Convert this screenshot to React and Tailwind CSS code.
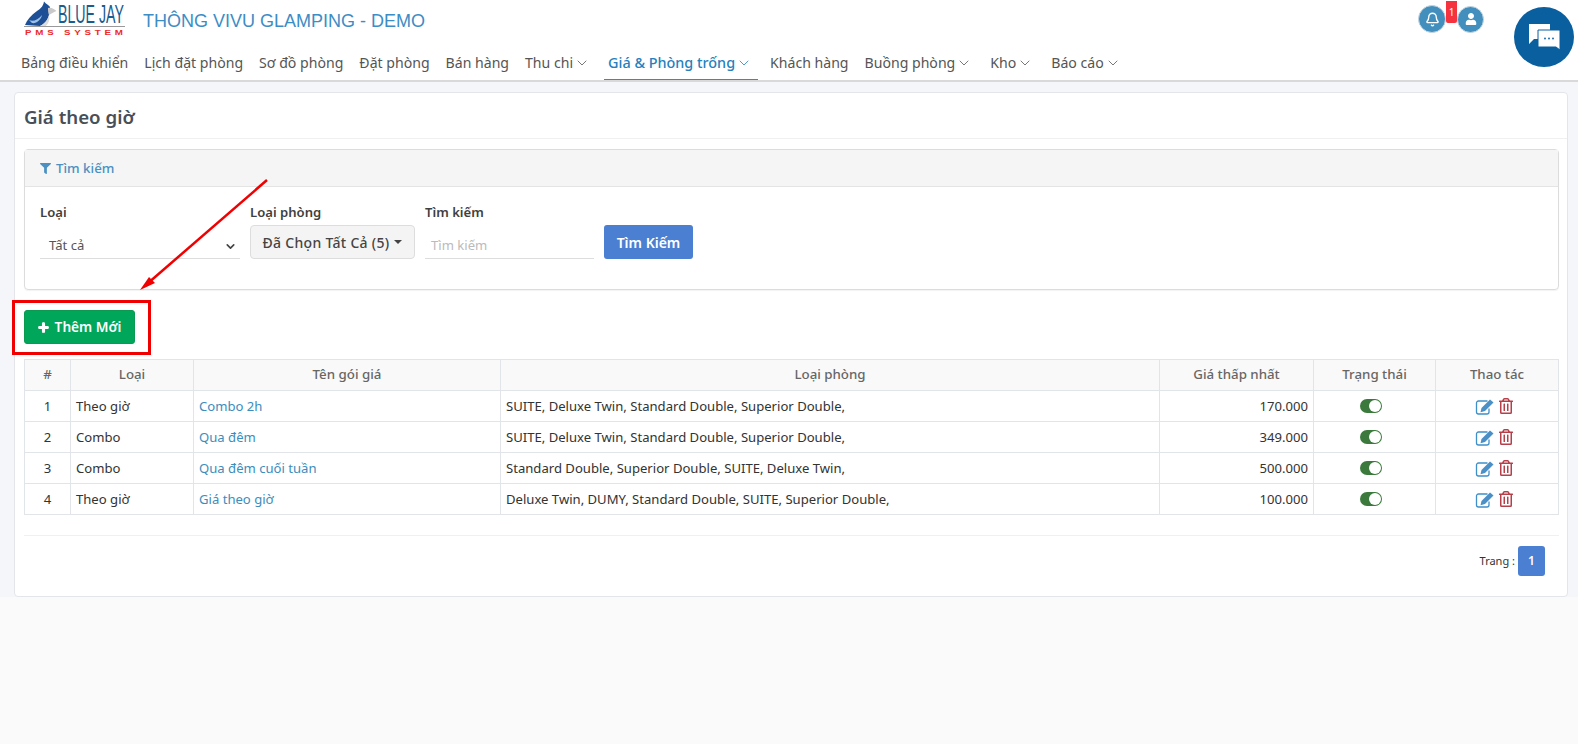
import React from 'react';
import { ChevronDown, Bell } from 'lucide-react';
import { FaFilter, FaPlus, FaUser, FaRegTrashAlt } from 'react-icons/fa';

const navItems = [
  { label: 'Bảng điều khiển' },
  { label: 'Lịch đặt phòng' },
  { label: 'Sơ đồ phòng' },
  { label: 'Đặt phòng' },
  { label: 'Bán hàng' },
  { label: 'Thu chi', caret: true },
  { label: 'Giá & Phòng trống', caret: true, active: true },
  { label: 'Khách hàng' },
  { label: 'Buồng phòng', caret: true },
  { label: 'Kho', caret: true },
  { label: 'Báo cáo', caret: true },
];

const rows = [
  { id: 1, type: 'Theo giờ', name: 'Combo 2h', rooms: 'SUITE, Deluxe Twin, Standard Double, Superior Double,', price: '170.000' },
  { id: 2, type: 'Combo', name: 'Qua đêm', rooms: 'SUITE, Deluxe Twin, Standard Double, Superior Double,', price: '349.000' },
  { id: 3, type: 'Combo', name: 'Qua đêm cuối tuần', rooms: 'Standard Double, Superior Double, SUITE, Deluxe Twin,', price: '500.000' },
  { id: 4, type: 'Theo giờ', name: 'Giá theo giờ', rooms: 'Deluxe Twin, DUMY, Standard Double, SUITE, Superior Double,', price: '100.000' },
];

const Logo = () => (
  <svg width="102" height="37" viewBox="0 0 102 37" className="shrink-0">
    <path d="M1 25 C3 20 7 15 13 11 C16 9 19 7 20 1.5 C22 4 25 5 26 7 L25 15 C24 20 20 24 16 26 Z" fill="#1d4f96" />
    <path d="M5 20 C9 22 14 20 18 15 C17 20 12 24 8 23 Z" fill="#9dc0e6" />
    <path d="M24 8 C27 7 30 9 32.5 11 C30 12 28 13 25 15 C24 13 24 10 24 8 Z" fill="#c9c9c9" />
    <path d="M16 26 C20 24 24 20 25 15 C26 19 25 23 22 26 Z" fill="#dddddd" />
    <text x="34" y="23" textLength="66" lengthAdjust="spacingAndGlyphs" fontFamily="Liberation Sans" fontSize="25" fill="#1a5c8e">BLUE JAY</text>
    <rect x="0" y="26" width="101" height="1" fill="#999" />
    <text transform="scale(1.4 1)" x="0.7" y="35" textLength="70" lengthAdjust="spacing" fontFamily="Liberation Sans" fontSize="7" fontWeight="700" fill="#ee2a2a">PMS SYSTEM</text>
  </svg>
);

const ChatIcon = () => (
  <svg width="33" height="28" viewBox="0 0 33 28">
    <path d="M1 1 H22 V16 H6 L1 21 Z" fill="#fff" />
    <path d="M10 7 H32 V27 L28 24 H10 Z" fill="#fff" stroke="#0a5f9e" strokeWidth="1" />
    <circle cx="17" cy="15.5" r="0.9" fill="#0a5f9e" />
    <circle cx="21" cy="15.5" r="0.9" fill="#0a5f9e" />
    <circle cx="25" cy="15.5" r="0.9" fill="#0a5f9e" />
  </svg>
);

const EditIcon = () => (
  <svg width="20" height="17" viewBox="0 0 20 17" className="shrink-0">
    <path d="M12.5 3 H3.5 A2 2 0 0 0 1.5 5 V14 A2 2 0 0 0 3.5 16 H12 A2 2 0 0 0 14 14 V10.5" fill="none" stroke="#3f8fc9" strokeWidth="1.3" />
    <polygon points="6.5,10 15,1.5 18.5,4.5 10,13 5.5,14.2" fill="#4a8fc6" />
  </svg>
);

const Toggle = () => (
  <div className="mx-auto flex h-[14px] w-[22px] items-center justify-end rounded-full bg-[#3b7a3c] pr-[1px]">
    <div className="h-[12px] w-[12px] rounded-full bg-white" />
  </div>
);

export default function App() {
  return (
    <div className="relative flex h-screen flex-col overflow-hidden bg-[#fafafa] font-['Noto_Sans','Open_Sans',sans-serif] text-[13.1px] text-[#333]">
      <header className="h-[82px] shrink-0 border-b-2 border-[#d9d9d9] bg-white">
        <div className="flex h-[44px] items-start pl-[24px] pr-[94px]">
          <Logo />
          <span className="ml-[17px] mt-[10px] font-['Liberation_Sans',sans-serif] text-[18px] leading-[22px] text-[#3c8dc5]">THÔNG VIVU GLAMPING - DEMO</span>
          <div className="ml-auto mt-[5px] flex items-center">
            <div className="flex h-[28px] w-[28px] items-center justify-center rounded-full border border-[#c5d5df] bg-[#428fbd] text-white">
              <Bell size={15} strokeWidth={2.2} />
            </div>
            <div className="relative ml-[11px] flex h-[27px] w-[27px] items-center justify-center rounded-full border border-[#c5d5df] bg-[#428fbd] text-white">
              <FaUser size={12} />
              <span className="absolute left-[-12px] top-[-6px] h-[22px] w-[11px] rounded-b-[2px] bg-[#f5333f] text-center text-[10px] leading-[22px] text-white">1</span>
            </div>
          </div>
        </div>
        <nav className="flex h-[36px] pl-[9px] text-[14.1px]">
          {navItems.map(item => (
            <div
              key={item.label}
              className={`ml-[8px] flex items-center whitespace-nowrap pl-[4px] pt-[2px] ${item.caret ? 'pr-[6px]' : 'pr-[4px]'} ${item.active ? 'border-b border-[#2d8ccc] text-[14.4px] font-medium text-[#2580bd]' : 'text-[#555]'}`}
            >
              {item.label}
              {item.caret && <ChevronDown size={16} strokeWidth={1.2} className="ml-[1px]" />}
            </div>
          ))}
        </nav>
      </header>

      <main className="h-[515px] shrink-0 bg-[#f5f6fa] pl-[14px] pr-[10px] pt-[10px]">
        <div className="h-[505px] rounded-[4px] border border-[#e3e5ea] bg-white">
          <div className="flex h-[46px] items-center border-b border-[#f0f0f0] pl-[9px] pt-[3px] text-[18.7px] font-semibold text-[#4a4f57]">Giá theo giờ</div>

          <section className="ml-[9px] mr-[8px] mt-[10px] h-[141px] rounded-[4px] border border-[#dcdcdc] shadow-[0_1px_1px_rgba(0,0,0,0.05)]">
            <div className="flex h-[37px] items-center gap-[5px] border-b border-[#e4e4e4] bg-[#f5f5f5] pl-[15px] pt-[1px] text-[13.3px] text-[#4a90c2]">
              <FaFilter size={11} />
              <span className="font-medium">Tìm kiếm</span>
            </div>
            <div className="flex items-start pl-[15px] pt-[15px]">
              <div className="w-[200px]">
                <label className="block font-semibold leading-[20px] text-[#3f3f3f]">Loại</label>
                <div className="mt-[4px] flex h-[33px] items-center justify-between border-b border-[#ddd] pl-[9px] pr-[3px] pt-[8px] text-[#555]">
                  Tất cả
                  <ChevronDown size={13} strokeWidth={3} className="text-[#444]" />
                </div>
              </div>
              <div className="ml-[10px] w-[165px]">
                <label className="block font-semibold leading-[20px] text-[#3f3f3f]">Loại phòng</label>
                <div className="mt-[3px] flex h-[34px] items-center justify-center gap-[5px] rounded-[4px] border border-[#ddd] bg-[#f4f4f4] text-[14px] font-medium tracking-[0.3px] text-[#444]">
                  Đã Chọn Tất Cả (5)
                  <span className="h-0 w-0 border-x-[4px] border-t-[4px] border-x-transparent border-t-[#444]" />
                </div>
              </div>
              <div className="ml-[10px] w-[169px]">
                <label className="block font-semibold leading-[20px] text-[#3f3f3f]">Tìm kiếm</label>
                <div className="mt-[4px] flex h-[33px] items-center border-b border-[#ddd] pl-[6px] pt-[8px] text-[#bbb]">Tìm kiếm</div>
              </div>
              <button className="ml-[10px] mt-[23px] h-[34px] w-[89px] rounded-[3px] bg-[#4a7fd1] text-[14px] font-semibold text-white">Tìm Kiếm</button>
            </div>
          </section>

          <div className="mx-[9px] mt-[20px]">
            <button className="flex h-[34px] w-[111px] items-center justify-center gap-[6px] rounded-[3px] border border-[#0a9a52] bg-[#00a65a] text-[13.7px] font-semibold text-white">
              <FaPlus size={11} stroke="currentColor" strokeWidth={50} />
              Thêm Mới
            </button>
          </div>

          <div className="ml-[9px] mt-[15px]">
            <table className="w-[1534px] table-fixed border-collapse border border-[#e1e4e9]">
              <colgroup>
                <col className="w-[46px]" />
                <col className="w-[123px]" />
                <col className="w-[307px]" />
                <col className="w-[659px]" />
                <col className="w-[154px]" />
                <col className="w-[122px]" />
                <col className="w-[123px]" />
              </colgroup>
              <thead>
                <tr className="h-[31px] bg-[#f9f9f9] text-[13.3px] font-medium text-[#666]">
                  <th className="border border-[#e1e4e9] font-medium">#</th>
                  <th className="border border-[#e1e4e9] font-medium">Loại</th>
                  <th className="border border-[#e1e4e9] font-medium">Tên gói giá</th>
                  <th className="border border-[#e1e4e9] font-medium">Loại phòng</th>
                  <th className="border border-[#e1e4e9] font-medium">Giá thấp nhất</th>
                  <th className="border border-[#e1e4e9] font-medium">Trạng thái</th>
                  <th className="border border-[#e1e4e9] font-medium">Thao tác</th>
                </tr>
              </thead>
              <tbody>
                {rows.map(row => (
                  <tr key={row.id} className="h-[31px]">
                    <td className="border border-[#e1e4e9] pt-[1px] text-center">{row.id}</td>
                    <td className="border border-[#e1e4e9] px-[5px] pt-[1px]">{row.type}</td>
                    <td className="border border-[#e1e4e9] px-[5px] pt-[1px] text-[#3c8dbc]">{row.name}</td>
                    <td className="border border-[#e1e4e9] px-[5px] pt-[1px]">{row.rooms}</td>
                    <td className="border border-[#e1e4e9] px-[5px] pt-[1px] text-right">{row.price}</td>
                    <td className="border border-[#e1e4e9] pr-[7px]"><Toggle /></td>
                    <td className="border border-[#e1e4e9] pr-[6px]">
                      <div className="flex items-center justify-center gap-[3px]">
                        <EditIcon />
                        <FaRegTrashAlt size={16} className="text-[#b5404a]" />
                      </div>
                    </td>
                  </tr>
                ))}
              </tbody>
            </table>
          </div>

          <div className="ml-[9px] mr-[8px] mt-[20px] flex items-center justify-end border-t border-[#f0f0f0] pr-[14px] pt-[10px]">
            <span className="mr-[3px] text-[11px]">Trang :</span>
            <span className="flex h-[30px] w-[27px] items-center justify-center rounded-[3px] bg-[#4a7fd1] text-[12px] font-semibold text-white">1</span>
          </div>
        </div>
      </main>

      {/* chat bubble */}
      <div className="absolute left-[1514px] top-[7px] flex h-[60px] w-[60px] items-center justify-center rounded-full bg-[#0a5f9e]">
        <ChatIcon />
      </div>

      {/* annotation over the screenshot */}
      <div className="absolute left-[12px] top-[300px] h-[55px] w-[139px] border-[3px] border-[#f00000]" />
      <svg className="absolute left-0 top-0" width="300" height="300" viewBox="0 0 300 300">
        <line x1="267" y1="180" x2="147" y2="284" stroke="#f00000" strokeWidth="2.5" />
        <polygon points="140,290 149,277 155,283" fill="#f00000" />
      </svg>
    </div>
  );
}
